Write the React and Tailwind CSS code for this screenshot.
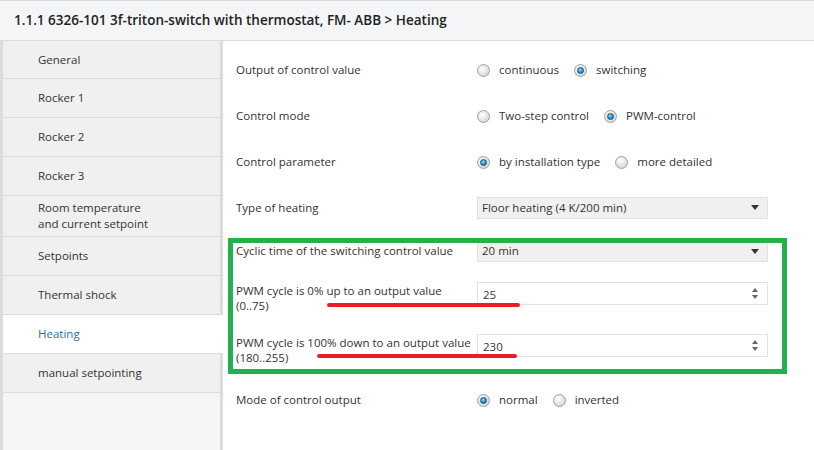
import React from "react";

const font = { fontFamily: '"Open Sans", "Noto Sans", sans-serif' };

function Radio({ checked }) {
  return (
    <span className="relative inline-flex h-[13px] w-[13px] shrink-0 items-center justify-center rounded-full border border-[#a0a0a0] bg-[radial-gradient(circle_at_40%_35%,#ffffff_0%,#e8e8e8_45%,#c9c9c9_100%)]">
      {checked && (
        <span className="h-[7px] w-[7px] rounded-full border border-[#1b4f72] bg-[radial-gradient(circle_at_40%_35%,#9fe3ff_0%,#2f9fd6_45%,#155e8f_100%)]" />
      )}
    </span>
  );
}

function RadioOpt({ checked, label, gap }) {
  return (
    <span className={"inline-flex items-center gap-[9px] " + (gap || "")}>
      <Radio checked={checked} />
      <span>{label}</span>
    </span>
  );
}

function Select({ value }) {
  return (
    <div className="flex h-[22px] w-[291px] items-center justify-between border border-[#e2e2e2] bg-[#f0f0f0] pl-[4px] pr-[8px]">
      <span>{value}</span>
      <svg width="8" height="5" viewBox="0 0 8 5"><path d="M0 0h8L4 5z" fill="#333" /></svg>
    </div>
  );
}

function Spin({ value }) {
  return (
    <div className="flex h-[23px] w-[291px] items-center justify-between border border-[#e2e2e2] bg-white pl-[5px] pr-[9px]">
      <span className="pt-[2px]">{value}</span>
      <span className="flex flex-col gap-[3px]">
        <svg width="6" height="4" viewBox="0 0 6 4"><path d="M3 0L6 4H0z" fill="#666" /></svg>
        <svg width="6" height="4" viewBox="0 0 6 4"><path d="M0 0h6L3 4z" fill="#666" /></svg>
      </span>
    </div>
  );
}

const items = [
  ["General", false, "h-[38px]"],
  ["Rocker 1", false, "h-[39px]"],
  ["Rocker 2", false, "h-[39px]"],
  ["Rocker 3", false, "h-[39px]"],
  ["Room temperature\nand current setpoint", false, "h-[41px]"],
  ["Setpoints", false, "h-[39px]"],
  ["Thermal shock", false, "h-[39px]"],
  ["Heating", true, "h-[39px]"],
  ["manual setpointing", false, "h-[39px]"],
];

export default function App() {
  return (
    <div className="relative h-[450px] w-[814px] overflow-hidden bg-white text-[11.5px] text-[#333]" style={font}>
      <div className="flex h-[41px] items-center border-y border-[#d9dadc] bg-[#f4f5f7] pl-[14px] text-[13.5px] font-semibold text-[#222]">
        1.1.1 6326-101 3f-triton-switch with thermostat, FM- ABB &gt; Heating
      </div>
      <div className="flex h-[409px]">
        <div className="flex w-[223px] flex-col border-l-[3px] border-[#dcdcdc]">
          {items.map(([label, active, h]) => (
            <div key={label} className={"flex " + h}>
              <div
                className={
                  "flex items-center whitespace-pre-line border-b border-[#dcdcdc] pl-[35px] leading-[16px] " +
                  (active ? "w-[220px] bg-white text-[#2d6ea8]" : "w-[217px] bg-[#f0f0f0]")
                }
              >
                {label}
              </div>
              {!active && <div className="w-[3px] bg-[#dcdcdc]" />}
            </div>
          ))}
          <div className="flex flex-1">
            <div className="w-[217px] bg-[#f4f5f6]" />
            <div className="w-[3px] bg-[#dcdcdc]" />
          </div>
        </div>
        <div className="flex flex-1 flex-col pl-[13px] pt-[6px]">
          <div className="flex h-[46px] items-center">
            <div className="w-[241px] whitespace-nowrap">Output of control value</div>
            <div className="flex items-center">
              <RadioOpt label="continuous" gap="mr-[15px]" />
              <RadioOpt checked label="switching" />
            </div>
          </div>
          <div className="flex h-[46px] items-center">
            <div className="w-[241px] whitespace-nowrap">Control mode</div>
            <div className="flex items-center">
              <RadioOpt label="Two-step control" gap="mr-[15px]" />
              <RadioOpt checked label="PWM-control" />
            </div>
          </div>
          <div className="flex h-[46px] items-center">
            <div className="w-[241px] whitespace-nowrap">Control parameter</div>
            <div className="flex items-center">
              <RadioOpt checked label="by installation type" gap="mr-[15px]" />
              <RadioOpt label="more detailed" />
            </div>
          </div>
          <div className="flex h-[45px] items-center">
            <div className="w-[241px] whitespace-nowrap">Type of heating</div>
            <Select value="Floor heating (4 K/200 min)" />
          </div>
          <div className="mt-[10px] flex h-[22px] items-center">
            <div className="w-[241px] whitespace-nowrap">Cyclic time of the switching control value</div>
            <Select value="20 min" />
          </div>
          <div className="mt-[20px] flex h-[32px] items-start">
            <div className="w-[241px] whitespace-nowrap pt-[1px] leading-[15px]">
              PWM cycle is 0% up to an output value
              <br />
              (0..75)
            </div>
            <Spin value="25" />
          </div>
          <div className="mt-[20px] flex h-[32px] items-start">
            <div className="w-[241px] whitespace-nowrap pt-[1px] leading-[15px]">
              PWM cycle is 100% down to an output value
              <br />
              (180..255)
            </div>
            <Spin value="230" />
          </div>
          <div className="mt-[23px] flex h-[22px] items-center">
            <div className="w-[241px] whitespace-nowrap">Mode of control output</div>
            <div className="flex items-center">
              <RadioOpt checked label="normal" gap="mr-[15px]" />
              <RadioOpt label="inverted" />
            </div>
          </div>
        </div>
      </div>
      {/* annotation overlays */}
      <div className="pointer-events-none absolute left-[228px] top-[238px] h-[136px] w-[559px] border-[5px] border-[#22b14c]" />
      <div className="pointer-events-none absolute left-[327px] top-[303px] h-[4px] w-[193px] rounded-full bg-[#ed1c24]" />
      <div className="pointer-events-none absolute left-[317px] top-[354px] h-[4px] w-[200px] rounded-full bg-[#ed1c24]" />
    </div>
  );
}
